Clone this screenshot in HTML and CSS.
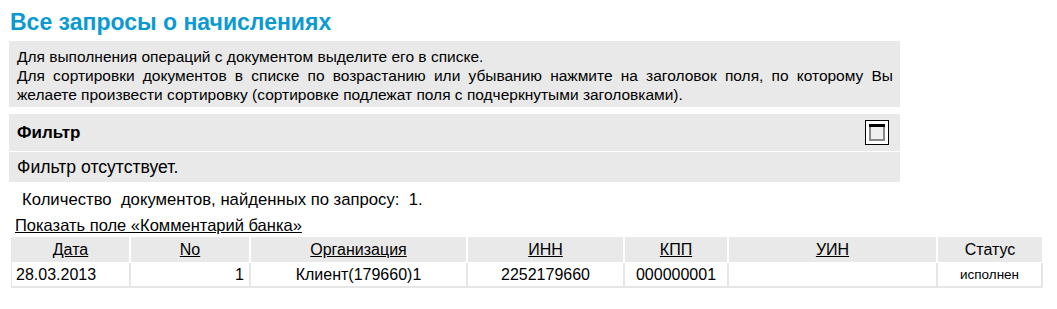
FILE: index.html
```html
<html lang="en">
<head>
    <meta charset="UTF-8">
    <meta name="viewport" content="width=device-width, initial-scale=1.0">
    <link rel="stylesheet" href="styles.css">
</head>
<body>
    <h1 class="title">Все запросы о начислениях</h1>

    <div class="info">
        Для выполнения операций с документом выделите его в списке.<br>
        Для сортировки документов в списке по возрастанию или убыванию нажмите на заголовок поля, по которому Вы желаете произвести сортировку (сортировке подлежат поля с подчеркнутыми заголовками).
    </div>

    <div class="filter">
        <div class="filter-head">
            <strong>Фильтр</strong>
            <span class="filter-toggle">
                <svg width="24" height="25" viewBox="0 0 24 25">
                    <rect x="0.5" y="0.5" width="23" height="24" fill="#fff" stroke="#000"/>
                    <rect x="4" y="4" width="16" height="17" fill="#888"/>
                    <rect x="6" y="7" width="12" height="12" fill="#efefef"/>
                    <rect x="4" y="4" width="16" height="3" fill="#000"/>
                </svg>
            </span>
        </div>
        <div class="filter-body">Фильтр отсутствует.</div>
    </div>

    <div class="count">Количество&nbsp; документов, найденных по запросу:&nbsp; 1.</div>
    <div class="toggle-link"><a href="#">Показать поле «Комментарий банка»</a></div>

    <table class="docs">
        <colgroup>
            <col style="width:119px">
            <col style="width:120px">
            <col style="width:217px">
            <col style="width:157px">
            <col style="width:104px">
            <col style="width:209px">
            <col style="width:105px">
        </colgroup>
        <thead>
            <tr>
                <th><a href="#">Дата</a></th>
                <th><a href="#">No</a></th>
                <th><a href="#">Организация</a></th>
                <th><a href="#">ИНН</a></th>
                <th><a href="#">КПП</a></th>
                <th><a href="#">УИН</a></th>
                <th>Статус</th>
            </tr>
        </thead>
        <tbody>
            <tr>
                <td class="left">28.03.2013</td>
                <td class="right">1</td>
                <td>Клиент(179660)1</td>
                <td>2252179660</td>
                <td>000000001</td>
                <td></td>
                <td class="status">исполнен</td>
            </tr>
        </tbody>
    </table>
</body>
</html>
```

FILE: styles.css
```css
body {
    font-family: Arial, "Liberation Sans", sans-serif;
    font-size: 14px;
    line-height: 19px;
    color: #000;
    margin: 0;
    background: #fff;
}
a {
    color: #000;
    text-decoration: underline;
}
.title {
    margin: 8px 0 5px 10px;
    font-size: 23px;
    line-height: 28px;
    font-weight: bold;
    color: #0a9ad1;
}
.info {
    margin-left: 9px;
    width: 876px;
    padding: 6px 7px 3px 8px;
    background: #e9e9e9;
    font-size: 15.5px;
    text-align: justify;
}
.filter {
    margin: 7px 0 0 9px;
    width: 891px;
    font-size: 17px;
}
.filter-head {
    display: flex;
    align-items: center;
    justify-content: space-between;
    height: 37px;
    padding: 0 11px 0 8px;
    background: #e9e9e9;
    border-bottom: 1px solid #fff;
}
.filter-toggle {
    display: flex;
    cursor: pointer;
}
.filter-body {
    height: 30px;
    line-height: 30px;
    padding-left: 8px;
    background: #e9e9e9;
    font-size: 17.6px;
}
.count {
    margin-top: 8px;
    padding-left: 22px;
    font-size: 16.7px;
}
.toggle-link {
    margin-top: 7px;
    padding-left: 15px;
    font-size: 16.5px;
}
.docs {
    margin: 2px 0 0 11px;
    width: 1031px;
    table-layout: fixed;
    border-collapse: separate;
    border-spacing: 0;
    border-left: 1px solid #e6e6e6;
}
.docs th {
    height: 26px;
    padding: 0;
    background: #e9e9e9;
    font-weight: normal;
    text-align: center;
    border-right: 2px solid #fff;
    border-bottom: 1px solid #fff;
}
.docs th:last-child {
    border-right: 1px solid #fff;
}
.docs td {
    height: 25px;
    padding: 0 4px;
    text-align: center;
    border-right: 2px solid #e6e6e6;
    border-bottom: 2px solid #e6e6e6;
}
.docs td.left {
    text-align: left;
}
.docs td.right {
    text-align: right;
    padding-right: 5px;
}
.docs td.status {
    font-size: 13.5px;
}
```
